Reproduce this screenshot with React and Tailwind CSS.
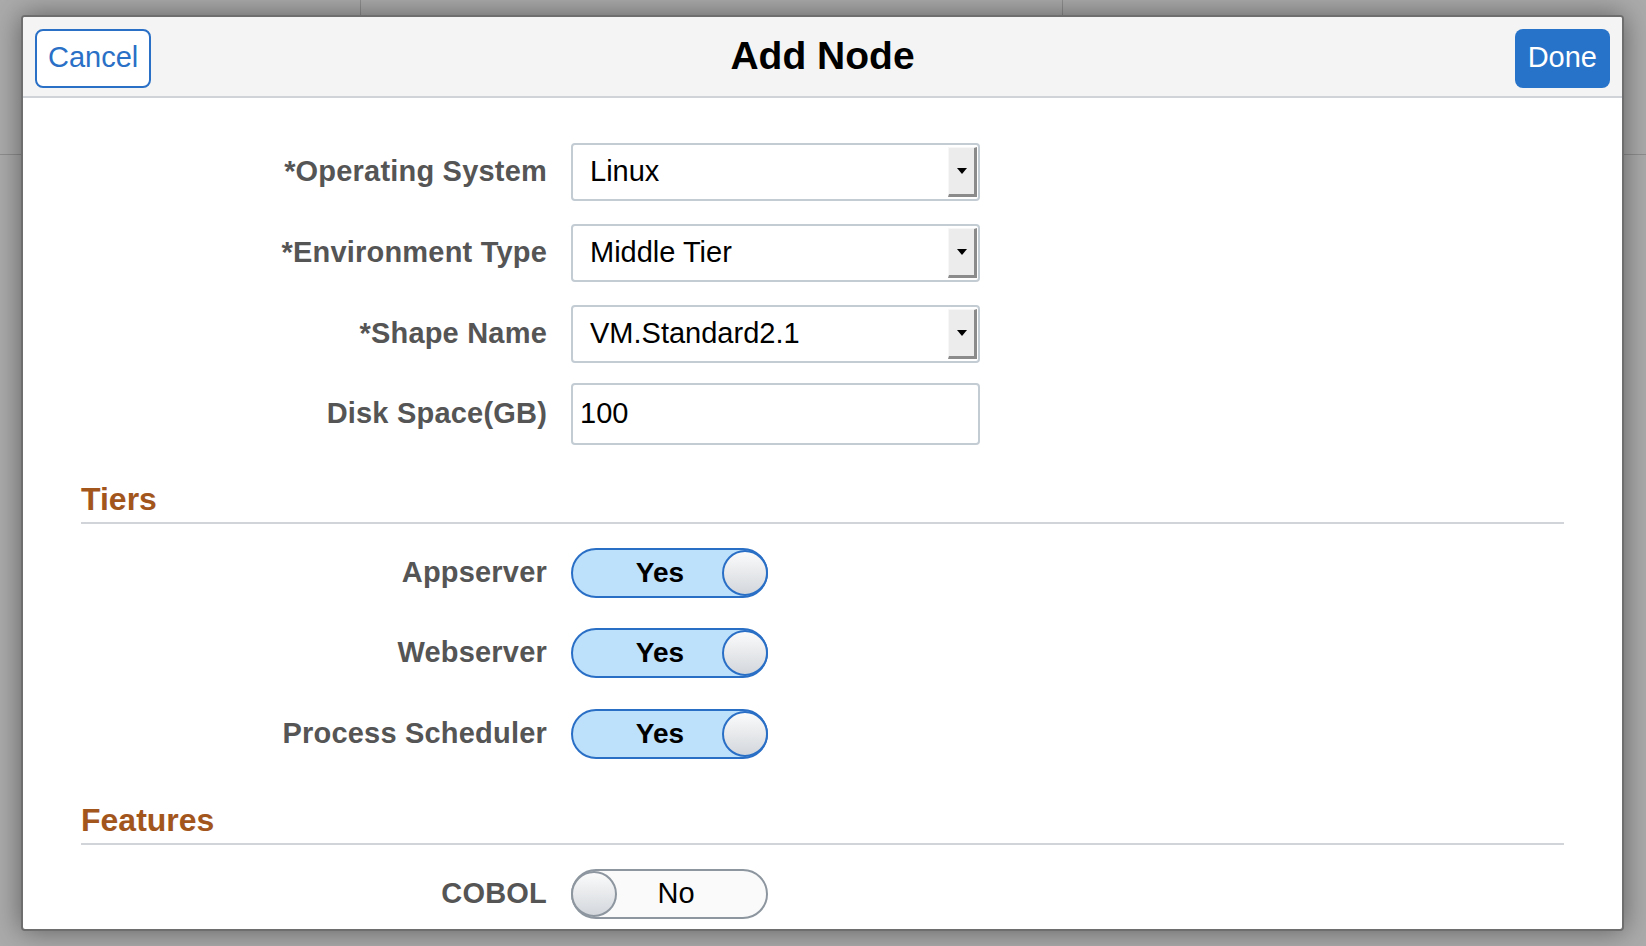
import React from 'react'

function SelectBox({ value }) {
    return (
        <div className="flex h-[58px] w-[409px] items-stretch rounded-[4px] border-2 border-[#c3cbd3] bg-white">
            <div className="flex flex-1 items-center pl-[17px] text-[29px] text-black">{value}</div>
            <div className="my-[2px] mr-[1px] flex w-[29px] items-center justify-center border-t border-l border-t-[#f7f7f7] border-l-[#f7f7f7] border-r-[3px] border-b-[3px] border-r-[#8b8b8b] border-b-[#8b8b8b] bg-[#ececec]">
                <span className="h-0 w-0 border-x-[5px] border-t-[6px] border-x-transparent border-t-black" />
            </div>
        </div>
    )
}

function Row({ label, children, className = '' }) {
    return (
        <div className={`flex items-center gap-6 ${className}`}>
            <div className="w-[466px] text-right text-[29px] font-bold tracking-[0.2px] text-[#555555]">{label}</div>
            {children}
        </div>
    )
}

function ToggleOn() {
    return (
        <div className="flex h-[50px] w-[197px] items-center rounded-full border-2 border-[#2a6fc6] bg-[#bde0fb]">
            <span className="flex-1 pl-[25px] text-center text-[28px] font-bold text-black">Yes</span>
            <span className="-mr-[2px] h-[46px] w-[46px] rounded-full border-2 border-[#2a6fc6] bg-linear-to-b from-[#fbfbfb] to-[#d3d7dc]" />
        </div>
    )
}

function ToggleOff() {
    return (
        <div className="flex h-[50px] w-[197px] items-center rounded-full border-2 border-[#8d969f] bg-[#fafafa]">
            <span className="-ml-[2px] h-[46px] w-[46px] rounded-full border-2 border-[#8d969f] bg-linear-to-b from-[#fbfbfb] to-[#d3d7dc]" />
            <span className="flex-1 pr-[31px] text-center text-[29px] text-black">No</span>
        </div>
    )
}

function SectionTitle({ children, className = '' }) {
    return (
        <div className={`border-b-2 border-[#d1d5da] pb-[4px] text-[32px] leading-[37px] font-bold text-[#a3561c] ${className}`}>
            {children}
        </div>
    )
}

export default function App() {
    return (
        <div className="relative h-[946px] w-full overflow-hidden bg-[#ababab] font-['Liberation_Sans',Arial,sans-serif]">
            {/* page behind the modal */}
            <div className="flex h-[155px] border-b border-[#8e8e8e]">
                <div className="w-[361px] border-r border-[#8e8e8e]" />
                <div className="w-[702px] border-r border-[#8e8e8e]" />
            </div>

            {/* modal */}
            <div className="absolute left-[21px] top-[15px] flex h-[916px] w-[1603px] flex-col overflow-hidden rounded-[4px] border-2 border-[#6e6e6e] bg-white shadow-[0_0_28px_rgba(0,0,0,0.45)]">
                <div className="grid h-[81px] shrink-0 grid-cols-[1fr_auto_1fr] items-center border-b-2 border-[#d0d4d9] bg-[#f4f4f4] px-3 pt-[3px]">
                    <button className="h-[59px] justify-self-start rounded-[8px] border-2 border-[#2a70c6] bg-white px-[11px] text-[29px] text-[#2a70c6]">
                        Cancel
                    </button>
                    <div className="-mt-[3px] text-[39px] font-bold text-black">Add Node</div>
                    <button className="h-[59px] justify-self-end rounded-[8px] bg-[#2673c9] px-[13px] text-[29px] text-white">
                        Done
                    </button>
                </div>

                <div className="flex flex-col px-[58px] pt-[45px]">
                    <Row label="*Operating System">
                        <SelectBox value="Linux" />
                    </Row>
                    <Row label="*Environment Type" className="mt-[23px]">
                        <SelectBox value="Middle Tier" />
                    </Row>
                    <Row label="*Shape Name" className="mt-[23px]">
                        <SelectBox value="VM.Standard2.1" />
                    </Row>
                    <Row label="Disk Space(GB)" className="mt-[20px]">
                        <div className="flex h-[62px] w-[409px] items-center rounded-[4px] border-2 border-[#c3cbd3] bg-white pl-[7px] text-[29px] text-black">
                            100
                        </div>
                    </Row>

                    <SectionTitle className="mt-[36px]">Tiers</SectionTitle>
                    <Row label="Appserver" className="mt-[24px]">
                        <ToggleOn />
                    </Row>
                    <Row label="Webserver" className="mt-[30px]">
                        <ToggleOn />
                    </Row>
                    <Row label="Process Scheduler" className="mt-[31px]">
                        <ToggleOn />
                    </Row>

                    <SectionTitle className="mt-[43px]">Features</SectionTitle>
                    <Row label="COBOL" className="mt-[24px]">
                        <ToggleOff />
                    </Row>
                </div>
            </div>
        </div>
    )
}
